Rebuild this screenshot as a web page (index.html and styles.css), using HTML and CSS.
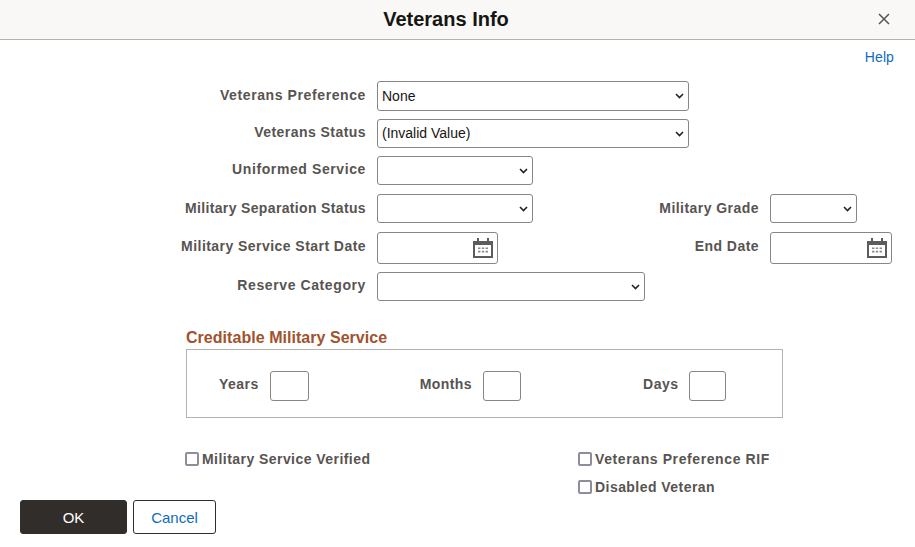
FILE: index.html
```html
<!DOCTYPE html>
<html lang="en">
<head>
<meta charset="utf-8">
<title>Veterans Info</title>
<link rel="stylesheet" href="styles.css">
</head>
<body>
<header class="titlebar">
  <h1 class="title">Veterans Info</h1>
  <button class="close" type="button" aria-label="Close">
    <svg width="12" height="12" viewBox="0 0 12 12"><path d="M1 1L11 11M11 1L1 11" stroke="#555" stroke-width="1.5" fill="none"/></svg>
  </button>
</header>
<div class="helpbar"><a class="help" href="#">Help</a></div>
<form class="form">
  <div class="row r1">
    <label class="label wider">Veterans Preference</label>
    <select class="sel w312"><option>None</option></select>
  </div>
  <div class="row r2">
    <label class="label">Veterans Status</label>
    <select class="sel w312 lift"><option>(Invalid Value)</option></select>
  </div>
  <div class="row r2">
    <label class="label wider">Uniformed Service</label>
    <select class="sel w156"><option></option></select>
  </div>
  <div class="row r3">
    <label class="label low narrower">Military Separation Status</label>
    <select class="sel w156"><option></option></select>
    <div class="side">
      <label class="label side-label low">Military Grade</label>
      <select class="sel w87"><option></option></select>
    </div>
  </div>
  <div class="row r3 tall">
    <label class="label high">Military Service Start Date</label>
    <div class="date">
      <input class="date-input" type="text">
      <svg class="cal" width="20" height="20" viewBox="0 0 20 20"><use href="#calendar"/></svg>
    </div>
    <div class="side">
      <label class="label side-label high">End Date</label>
      <div class="date wide">
        <input class="date-input" type="text">
        <svg class="cal" width="20" height="20" viewBox="0 0 20 20"><use href="#calendar"/></svg>
      </div>
    </div>
  </div>
  <div class="row r4">
    <label class="label wider">Reserve Category</label>
    <select class="sel w268"><option></option></select>
  </div>

  <section class="cms">
    <h2 class="cms-title">Creditable Military Service</h2>
    <div class="cms-box">
      <label class="label cms-years">Years</label>
      <input class="num n39" type="text">
      <label class="label cms-months">Months</label>
      <input class="num n38" type="text">
      <label class="label cms-days">Days</label>
      <input class="num n37" type="text">
    </div>
  </section>

  <div class="checks">
    <div class="checks-left">
      <label class="check"><input class="cb" type="checkbox">Military Service Verified</label>
    </div>
    <div class="checks-right">
      <label class="check wider"><input class="cb" type="checkbox">Veterans Preference RIF</label>
      <label class="check"><input class="cb" type="checkbox">Disabled Veteran</label>
    </div>
  </div>
</form>
<div class="actions">
  <button class="btn ok" type="button">OK</button>
  <button class="btn cancel" type="button">Cancel</button>
</div>
<svg width="0" height="0" class="defs">
  <symbol id="calendar" viewBox="0 0 20 20">
    <path d="M1 4H19V19H1Z" fill="none" stroke="#5c5c5c" stroke-width="2"/>
    <path d="M1 3H19V7H1Z" fill="#5c5c5c"/>
    <path d="M5 0V4M15 0V4" stroke="#5c5c5c" stroke-width="2"/>
    <path d="M5 9.5h2.4v1.6H5zM8.8 9.5h2.4v1.6H8.8zM12.6 9.5H15v1.6h-2.4zM5 12.8h2.4v1.6H5zM8.8 12.8h2.4v1.6H8.8zM12.6 12.8H15v1.6h-2.4z" fill="#8a8a8a"/>
  </symbol>
</svg>
</body>
</html>
```
FILE: styles.css
```css
* { box-sizing: border-box; }
html, body { margin: 0; padding: 0; }
body {
  width: 915px;
  height: 547px;
  overflow: hidden;
  background: #fff;
  font-family: "Liberation Sans", Arial, sans-serif;
  color: #555;
}
.defs { display: block; height: 0; }
.titlebar {
  height: 40px;
  background: #f9f8f6;
  border-bottom: 1px solid #b5b3ae;
  display: flex;
  align-items: center;
  justify-content: center;
  padding-right: 23px;
  position: relative;
}
.title { margin: 0 0 1px; font-size: 20px; font-weight: bold; color: #161513; }
.close {
  position: absolute;
  right: 25px;
  top: 13px;
  width: 12px;
  height: 12px;
  padding: 0;
  border: 0;
  background: none;
  display: block;
}
.close svg { display: block; }
.helpbar {
  display: flex;
  justify-content: flex-end;
  padding: 9px 21px 0 0;
  height: 41px;
}
.help { font-size: 14px; line-height: 16px; letter-spacing: 0.1px; color: #0f6cbd; text-decoration: none; }
.form { width: 892px; }
.row { display: flex; align-items: center; height: 29px; }
.r1 { height: 30px; }
.r2 { margin-top: 8px; }
.r3 { margin-top: 9px; }
.r3.tall { height: 32px; }
.r4 { margin-top: 8px; }
.label {
  font-size: 14px;
  font-weight: bold;
  line-height: 16px;
  color: #575451;
  letter-spacing: 0.45px;
  text-align: right;
  margin-bottom: 3px;
}
.label.low { margin-bottom: 1px; }
.label.high { margin-bottom: 5px; }
.wider.label, .wider.check { letter-spacing: 0.6px; }
.narrower.label { letter-spacing: 0.35px; }
.row > .label { width: 366px; margin-right: 11px; flex: none; }
.sel {
  appearance: none;
  height: 100%;
  font-family: "Liberation Sans", Arial, sans-serif;
  font-size: 14px;
  color: #161513;
  background: #fff url("data:image/svg+xml,%3Csvg xmlns='http://www.w3.org/2000/svg' width='9' height='6' viewBox='0 0 9 6'%3E%3Cpath d='M1 1L4.5 4.5L8 1' fill='none' stroke='%23222' stroke-width='1.6'/%3E%3C/svg%3E") no-repeat right 4px center;
  border: 1px solid #8a8580;
  border-radius: 3px;
  padding: 0 16px 0 4px;
  flex: none;
}
.sel.lift { padding-bottom: 2px; }
.w312 { width: 312px; }
.w268 { width: 268px; }
.w156 { width: 156px; }
.w87 { width: 87px; }
.side {
  margin-left: auto;
  width: 259px;
  height: 100%;
  display: flex;
  align-items: center;
  gap: 11px;
}
.side-label { width: 126px; flex: none; }
.date {
  width: 121px;
  height: 100%;
  flex: none;
  border: 1px solid #8a8580;
  border-radius: 3px;
  display: flex;
  align-items: center;
  background: #fff;
}
.date.wide { width: 122px; }
.date-input {
  flex: 1;
  min-width: 0;
  height: 100%;
  border: 0;
  background: none;
  padding: 0 4px;
}
.cal { flex: none; margin-right: 4px; display: block; }
.cms { margin: 27px 0 0 186px; width: 597px; }
.cms-title {
  margin: 0;
  font-size: 16px;
  line-height: 20px;
  font-weight: bold;
  letter-spacing: 0.04px;
  color: #a0522d;
}
.cms-box {
  margin-top: 1px;
  height: 69px;
  border: 1px solid #b5b3ae;
  display: flex;
  align-items: center;
  padding-top: 4px;
}
.cms-box .label { margin-right: 11px; flex: none; }
.cms-years { margin-left: 32px; }
.cms-months { margin-left: 111px; }
.cms-days { margin-left: 122px; }
.num {
  height: 30px;
  border: 1px solid #8a8580;
  border-radius: 3px;
  background: #fff;
  flex: none;
  padding: 0 4px;
}
.n39 { width: 39px; }
.n38 { width: 38px; }
.n37 { width: 37px; }
.checks {
  margin: 33px 0 0 185px;
  display: flex;
  align-items: flex-start;
}
.checks-left { width: 393px; flex: none; }
.checks-right {
  display: flex;
  flex-direction: column;
  gap: 12px;
}
.check {
  display: flex;
  align-items: center;
  font-size: 14px;
  font-weight: bold;
  line-height: 16px;
  letter-spacing: 0.45px;
  color: #575451;
}
.cb {
  appearance: none;
  width: 14px;
  height: 14px;
  margin: 0 3px 0 0;
  border: 2px solid #8f8d9b;
  border-radius: 2px;
  background: #fff;
  flex: none;
}
.actions { display: flex; gap: 6px; margin: 5px 0 0 20px; }
.btn {
  height: 34px;
  font-family: "Liberation Sans", Arial, sans-serif;
  font-size: 15px;
  border-radius: 3px;
  padding: 0;
}
.ok { width: 107px; background: #312d2a; border: 1px solid #312d2a; color: #fff; }
.cancel { width: 83px; background: #fff; border: 1px solid #312d2a; color: #0f6cbd; }
```
